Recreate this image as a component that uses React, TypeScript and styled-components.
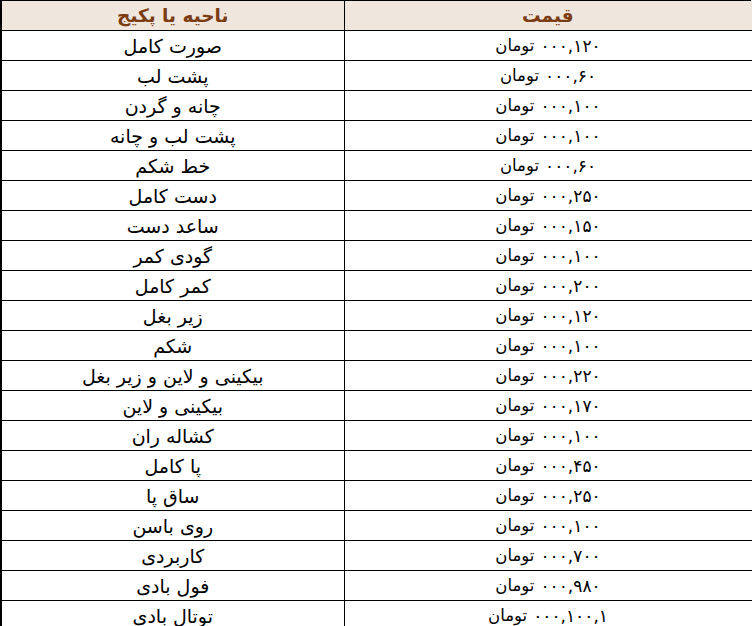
import React from "react";
import styled, { createGlobalStyle } from "styled-components";

const PRICES = [
  { area: "صورت کامل", price: "۱۲۰,۰۰۰" },
  { area: "پشت لب", price: "۶۰,۰۰۰" },
  { area: "چانه و گردن", price: "۱۰۰,۰۰۰" },
  { area: "پشت لب و چانه", price: "۱۰۰,۰۰۰" },
  { area: "خط شکم", price: "۶۰,۰۰۰" },
  { area: "دست کامل", price: "۲۵۰,۰۰۰" },
  { area: "ساعد دست", price: "۱۵۰,۰۰۰" },
  { area: "گودی کمر", price: "۱۰۰,۰۰۰" },
  { area: "کمر کامل", price: "۲۰۰,۰۰۰" },
  { area: "زیر بغل", price: "۱۲۰,۰۰۰" },
  { area: "شکم", price: "۱۰۰,۰۰۰" },
  { area: "بیکینی و لاین و زیر بغل", price: "۲۲۰,۰۰۰" },
  { area: "بیکینی و لاین", price: "۱۷۰,۰۰۰" },
  { area: "کشاله ران", price: "۱۰۰,۰۰۰" },
  { area: "پا کامل", price: "۴۵۰,۰۰۰" },
  { area: "ساق پا", price: "۲۵۰,۰۰۰" },
  { area: "روی باسن", price: "۱۰۰,۰۰۰" },
  { area: "کاربردی", price: "۷۰۰,۰۰۰" },
  { area: "فول بادی", price: "۹۸۰,۰۰۰" },
  { area: "توتال بادی", price: "۱,۱۰۰,۰۰۰" },
];

// the source sheet shows the digit groups in right-to-left order
const toSheetOrder = (price: string) => price.split(",").reverse().join(",");

const GlobalStyle = createGlobalStyle`
  html, body {
    margin: 0;
    padding: 0;
    background: #ffffff;
    overflow: hidden;
  }
`;

const PriceTable = () => {
  return (
    <>
      <GlobalStyle />
      <Table>
        <colgroup>
          <col style={{ width: 343 }} />
          <col />
        </colgroup>
        <thead>
          <tr>
            <HeadCell>ناحیه یا پکیج</HeadCell>
            <HeadCell>قیمت</HeadCell>
          </tr>
        </thead>
        <tbody>
          {PRICES.map((item) => (
            <Row key={item.area}>
              <AreaCell>{item.area}</AreaCell>
              <PriceCell>
                <PriceInner>
                  <Currency>تومان</Currency>
                  <Amount>{toSheetOrder(item.price)}</Amount>
                </PriceInner>
              </PriceCell>
            </Row>
          ))}
        </tbody>
      </Table>
    </>
  );
};

const Table = styled.table`
  width: 752px;
  border-collapse: collapse;
  table-layout: fixed;
  font-family: "DejaVu Sans", "Liberation Sans", sans-serif;
  border-left: 2px solid #000;
`;

const HeadCell = styled.th`
  height: 29px;
  padding: 0;
  background: #efe6de;
  color: #7a3c10;
  font-size: 18.5px;
  font-weight: bold;
  text-align: center;
  direction: rtl;
  border: 1px solid #000;
  border-right-color: #efe6de;
  &:first-child {
    border-right-color: #000;
  }
`;

const Row = styled.tr`
  height: 30px;
`;

const Cell = styled.td`
  padding: 0;
  height: 29px;
  color: #000;
  text-align: center;
  border: 1px solid #000;
  border-right: none;
`;

const AreaCell = styled(Cell)`
  direction: rtl;
  font-size: 19px;
  border-right: 1px solid #000;
`;

const PriceCell = styled(Cell)``;

const PriceInner = styled.div`
  display: flex;
  justify-content: center;
  align-items: center;
  gap: 6px;
  direction: ltr;
`;

const Currency = styled.span`
  font-size: 16.5px;
  direction: rtl;
`;

const Amount = styled.span`
  font-size: 17px;
  direction: ltr;
  unicode-bidi: isolate;
  letter-spacing: 0.6px;
`;

export default PriceTable;
